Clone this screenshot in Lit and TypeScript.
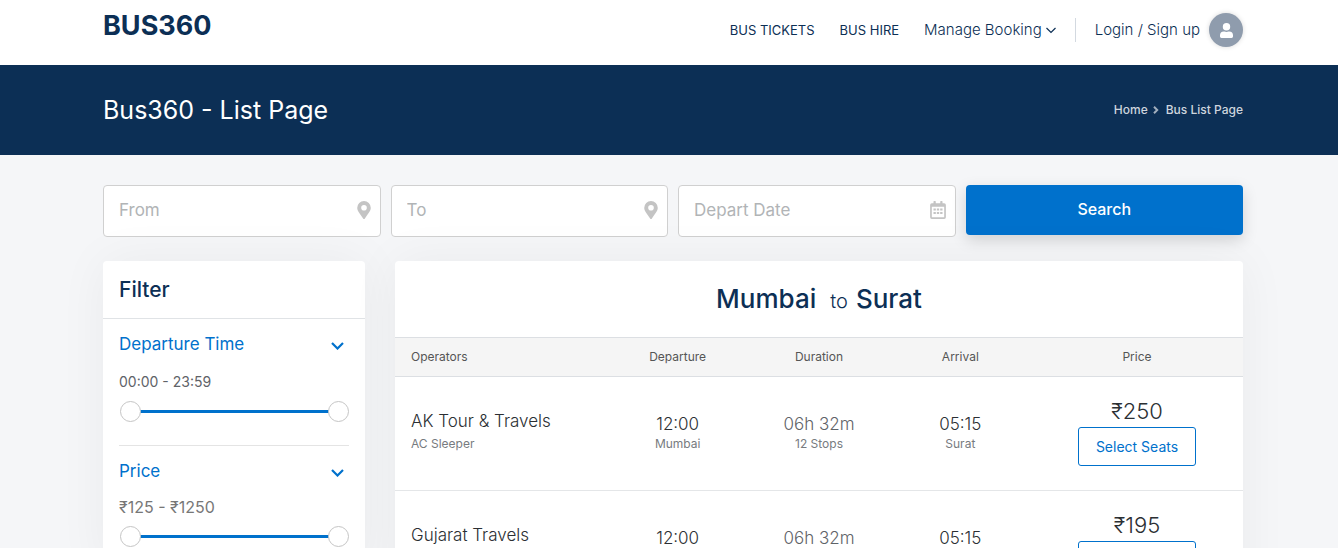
import { LitElement, html, css, svg } from "lit";
import { customElement, property, state } from "lit/decorators.js";

interface Trip {
  operator: string;
  coach: string;
  departs: string;
  from: string;
  duration: string;
  stops: string;
  arrives: string;
  to: string;
  price: number;
}

const trips: Trip[] = [
  { operator: "AK Tour & Travels", coach: "AC Sleeper", departs: "12:00", from: "Mumbai", duration: "06h 32m", stops: "12 Stops", arrives: "05:15", to: "Surat", price: 250 },
  { operator: "Gujarat Travels", coach: "AC Sleeper", departs: "12:00", from: "Mumbai", duration: "06h 32m", stops: "12 Stops", arrives: "05:15", to: "Surat", price: 195 },
];

const pinIcon = svg`<svg width="14" height="18" viewBox="0 0 384 512" fill="#c4c4c4" aria-hidden="true"><path d="M172 502C27 291 0 270 0 192a192 192 0 0 1 384 0c0 78-27 99-172 310a24 24 0 0 1-40 0zM192 272a80 80 0 1 0 0-160 80 80 0 0 0 0 160z"/></svg>`;

const calendarIcon = svg`<svg width="16" height="18" viewBox="0 0 448 512" fill="#c4c4c4" aria-hidden="true"><path fill-rule="evenodd" d="M400 64h-48V12a12 12 0 0 0-12-12h-40a12 12 0 0 0-12 12v52H160V12a12 12 0 0 0-12-12h-40a12 12 0 0 0-12 12v52H48a48 48 0 0 0-48 48v352a48 48 0 0 0 48 48h352a48 48 0 0 0 48-48V112a48 48 0 0 0-48-48zm-6 400H54a6 6 0 0 1-6-6V160h352v298a6 6 0 0 1-6 6z"/><path d="M96 210h66v62H96zM191 210h66v62h-66zM286 210h66v62h-66zM96 310h66v62H96zM191 310h66v62h-66zM286 310h66v62h-66z"/></svg>`;

const userIcon = svg`<svg width="13" height="15" viewBox="0 0 448 512" fill="#fff" aria-hidden="true"><path d="M224 256a128 128 0 1 0 0-256 128 128 0 0 0 0 256zm90 32h-17a174 174 0 0 1-146 0h-17A134 134 0 0 0 0 422v42a48 48 0 0 0 48 48h352a48 48 0 0 0 48-48v-42a134 134 0 0 0-134-134z"/></svg>`;

@customElement("range-filter")
export class RangeFilter extends LitElement {
  @property() name = "";
  @property({ type: Number }) min = 0;
  @property({ type: Number }) max = 100;
  @property({ attribute: false }) format: (n: number) => string = String;
  @state() private low?: number;
  @state() private high?: number;

  static styles = css`
    :host { display: block; }
    .readout { margin: 0; font-size: 14px; line-height: 20px; color: #5f6368; }
    :host([large]) .readout { font-size: 16px; color: #777; }
    .slider { display: grid; align-items: center; height: 22px; margin: 8px 0 0 1px; }
    .track, .thumb { grid-area: 1 / 1; }
    .track { height: 3px; margin: 0 10px; background: #0071cc; }
    .thumb { appearance: none; width: 100%; height: 22px; margin: 0; background: none; pointer-events: none; }
    .thumb::-webkit-slider-thumb {
      appearance: none; box-sizing: border-box; width: 21px; height: 21px;
      border: 1px solid #c5c5c5; border-radius: 50%; background: #fff;
      pointer-events: auto; cursor: pointer;
    }
  `;

  render() {
    const low = this.low ?? this.min;
    const high = this.high ?? this.max;
    return html`
      <p class="readout">${this.format(low)} - ${this.format(high)}</p>
      <div class="slider">
        <div class="track"></div>
        <input class="thumb" type="range" aria-label="Minimum ${this.name}" min=${this.min} max=${this.max} .value=${String(low)}
          @input=${(e: Event) => { this.low = Math.min(Number((e.target as HTMLInputElement).value), high); }} />
        <input class="thumb" type="range" aria-label="Maximum ${this.name}" min=${this.min} max=${this.max} .value=${String(high)}
          @input=${(e: Event) => { this.high = Math.max(Number((e.target as HTMLInputElement).value), low); }} />
      </div>
    `;
  }
}

@customElement("app-root")
export class AppRoot extends LitElement {
  static styles = css`
    :host {
      display: block; min-height: 100vh; background: #f5f6f8;
      font-family: Inter, "Open Sans", sans-serif; color: #2b2f33;
    }
    * { box-sizing: border-box; }
    a { color: inherit; text-decoration: none; }
    button { font-family: inherit; cursor: pointer; }
    .wrap { padding: 0 95px 0 103px; }

    .header { display: flex; justify-content: space-between; height: 65px; background: #fff; color: #0c2f55; }
    .logo { padding-top: 8px; font-size: 27px; line-height: 36px; font-weight: 700; }
    .nav { display: flex; align-items: center; height: 60px; font-size: 13px; line-height: 20px; }
    .nav-link { margin-right: 25px; }
    .nav-menu { display: flex; align-items: center; gap: 4px; padding: 0; border: 0; background: none; color: inherit; font-size: 15px; line-height: 20px; font-weight: 300; }
    .divider { width: 1px; height: 24px; margin: 0 19px; background: #d3d9e0; }
    .login { display: flex; align-items: center; gap: 9px; font-size: 15px; font-weight: 300; }
    .avatar { display: grid; place-items: center; width: 34px; height: 34px; border-radius: 50%; background: #8f9cad; box-shadow: 0 0 5px rgba(0, 0, 0, 0.15); }

    .banner { display: flex; align-items: center; justify-content: space-between; height: 90px; background: #0c2f55; color: #fff; }
    .banner-title { margin: 0; font-size: 25px; line-height: 32px; font-weight: 400; }
    .crumbs { display: flex; align-items: center; font-size: 12px; line-height: 18px; font-weight: 500; color: #ced5dd; }
    .crumb-mark { margin: 0 7px 0 5px; }

    .search { display: grid; grid-template-columns: repeat(4, minmax(0, 1fr)); gap: 10px; align-items: start; padding-top: 30px; padding-bottom: 24px; }
    .field { display: flex; align-items: center; height: 52px; padding: 0 9px 2px 15px; border: 1px solid #d0d0d0; border-radius: 4px; background: #fff; }
    .field-input { flex: 1; min-width: 0; padding: 0; border: 0; outline: 0; background: none; font: inherit; font-size: 17px; line-height: 24px; }
    .field-input::placeholder { color: #b1b4b6; opacity: 1; }
    .search-button { height: 50px; padding: 0 0 2px; border: 0; border-radius: 4px; background: #0071cc; color: #fff; font-size: 16px; font-weight: 500; box-shadow: 0 5px 15px rgba(0, 0, 0, 0.15); }

    .content { display: grid; grid-template-columns: 262px 1fr; gap: 30px; align-items: start; padding-bottom: 30px; }
    .card { border-radius: 4px; background: #fff; box-shadow: 0 0 50px rgba(0, 0, 0, 0.05); }
    .filter-title { margin: 0; padding: 13px 16px; border-bottom: 1px solid #e0e3e6; color: #0c2f55; font-size: 21px; line-height: 31px; font-weight: 500; }
    .group { margin: 0 16px; padding: 14px 0 23px; border-bottom: 1px solid #e4e4e4; }
    .group:last-child { border-bottom: 0; }
    .group-title { margin: 0 0 17px; font-size: 17px; line-height: 22px; font-weight: 400; }
    .group.tight .group-title { margin-bottom: 15px; }
    .toggle { display: flex; align-items: center; justify-content: space-between; width: 100%; padding: 0 5px 0 0; border: 0; background: none; color: #0071cc; font-size: 17px; line-height: 22px; }
    .chevron { margin-top: 4px; }

    .route { display: flex; justify-content: center; align-items: baseline; margin: 0; padding: 20px 0; color: #0c2f55; font-size: 26px; line-height: 36px; font-weight: 500; }
    .route-to { margin: 0 8px 0 14px; font-size: 20px; line-height: 20px; font-weight: 300; }
    .results { width: 100%; border-collapse: separate; border-spacing: 0; table-layout: fixed; text-align: center; }
    .col-wide { width: 25%; }
    .head { height: 40px; padding: 0; border-top: 1px solid #dcdfe3; border-bottom: 1px solid #dcdfe3; background: #f5f5f5; color: #555; font-size: 12px; line-height: 18px; font-weight: 400; }
    .cell { height: 114px; padding: 0 0 8px; border-bottom: 1px solid #e4e6e8; vertical-align: middle; }
    .cell.last { padding-bottom: 2px; }
    .head.first, .cell.first { padding-left: 16px; text-align: left; }
    .operator { font-size: 17px; line-height: 28px; font-weight: 300; }
    .time { padding-top: 6px; font-size: 17px; line-height: 22px; font-weight: 300; }
    .duration { padding-top: 6px; color: #5f6368; font-size: 17px; line-height: 22px; font-weight: 300; }
    .small { color: #777b80; font-size: 12px; line-height: 18px; }
    .price { margin-bottom: 4px; font-size: 22px; line-height: 24px; font-weight: 300; }
    .select { display: block; height: 39px; margin: 0 auto; padding: 0 17px; border: 1px solid #0071cc; border-radius: 3px; background: #fff; color: #0071cc; font-size: 14px; line-height: 20px; }
  `;

  private clock = (minutes: number) =>
    `${String(Math.floor(minutes / 60)).padStart(2, "0")}:${String(minutes % 60).padStart(2, "0")}`;

  private field(label: string, icon: unknown) {
    return html`<label class="field"><input class="field-input" type="text" aria-label=${label} placeholder=${label} />${icon}</label>`;
  }

  private toggle(label: string) {
    return html`
      <h3 class="group-title">
        <button class="toggle" type="button" aria-expanded="true">
          ${label}
          <svg class="chevron" width="13" height="8" viewBox="0 0 13 8" fill="none" stroke="#0071cc" stroke-width="2.200" aria-hidden="true"><path d="M1 1l5.500 5.500L12 1"/></svg>
        </button>
      </h3>`;
  }

  private row(t: Trip) {
    return html`
      <tr>
        <td class="cell first"><div class="operator">${t.operator}</div><div class="small">${t.coach}</div></td>
        <td class="cell"><div class="time">${t.departs}</div><div class="small">${t.from}</div></td>
        <td class="cell"><div class="duration">${t.duration}</div><div class="small">${t.stops}</div></td>
        <td class="cell"><div class="time">${t.arrives}</div><div class="small">${t.to}</div></td>
        <td class="cell last"><div class="price">₹${t.price}</div><button class="select" type="button">Select Seats</button></td>
      </tr>`;
  }

  render() {
    return html`
      <header class="header wrap">
        <a class="logo" href="#">BUS360</a>
        <nav class="nav">
          <a class="nav-link" href="#">BUS TICKETS</a>
          <a class="nav-link" href="#">BUS HIRE</a>
          <button class="nav-menu" type="button">Manage Booking
            <svg width="10" height="7" viewBox="0 0 10 7" fill="none" stroke="#0c2f55" stroke-width="1.200" aria-hidden="true"><path d="M.5 1L5 5.500 9.500 1"/></svg>
          </button>
          <span class="divider"></span>
          <a class="login" href="#">Login / Sign up <span class="avatar">${userIcon}</span></a>
        </nav>
      </header>
      <section class="banner wrap">
        <h1 class="banner-title">Bus360 - List Page</h1>
        <nav class="crumbs" aria-label="Breadcrumb">
          <a href="#">Home</a>
          <svg class="crumb-mark" width="6" height="8" viewBox="0 0 6 8" fill="none" stroke="#a3afbd" stroke-width="2" aria-hidden="true"><path d="M1 .8L4.200 4 1 7.200"/></svg>
          <span>Bus List Page</span>
        </nav>
      </section>
      <form class="search wrap" @submit=${(e: Event) => e.preventDefault()}>
        ${this.field("From", pinIcon)}
        ${this.field("To", pinIcon)}
        ${this.field("Depart Date", calendarIcon)}
        <button class="search-button" type="submit">Search</button>
      </form>
      <main class="content wrap">
        <aside class="card">
          <h2 class="filter-title">Filter</h2>
          <section class="group">
            ${this.toggle("Departure Time")}
            <range-filter name="departure time" min="0" max="1439" .format=${this.clock}></range-filter>
          </section>
          <section class="group tight">
            ${this.toggle("Price")}
            <range-filter large name="price" min="125" max="1250" .format=${(n: number) => `₹${n}`}></range-filter>
          </section>
        </aside>
        <section class="card">
          <h2 class="route">Mumbai <span class="route-to">to</span> Surat</h2>
          <table class="results">
            <colgroup><col class="col-wide" /><col /><col /><col /><col class="col-wide" /></colgroup>
            <thead>
              <tr>
                <th class="head first" scope="col">Operators</th>
                <th class="head" scope="col">Departure</th>
                <th class="head" scope="col">Duration</th>
                <th class="head" scope="col">Arrival</th>
                <th class="head" scope="col">Price</th>
              </tr>
            </thead>
            <tbody>${trips.map((t) => this.row(t))}</tbody>
          </table>
        </section>
      </main>
    `;
  }
}
